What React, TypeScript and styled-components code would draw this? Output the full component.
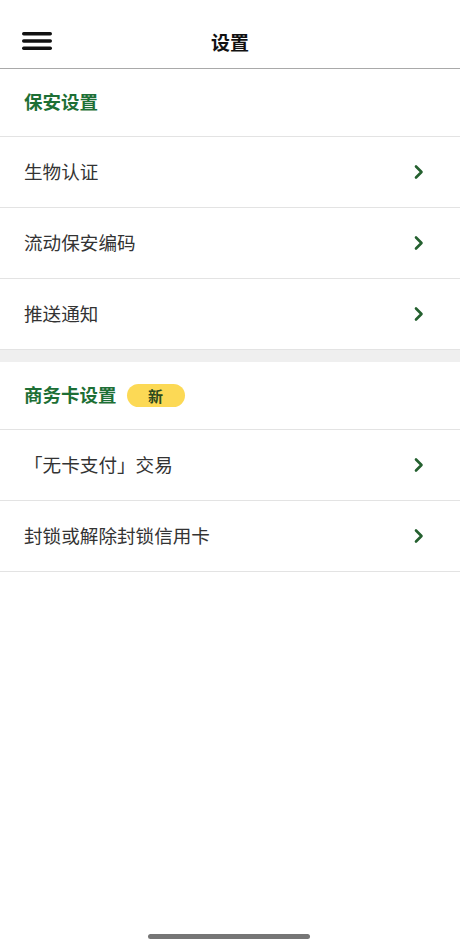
import React from 'react';
import styled, {createGlobalStyle} from 'styled-components';

const GlobalStyle = createGlobalStyle`
    html, body {
        margin: 0;
        padding: 0;
        background: #ffffff;
    }
    body {
        font-family: "Noto Sans CJK SC", "Noto Sans", sans-serif;
        color: #333333;
    }
`;

const Page = styled.div`
    width: 460px;
    height: 949px;
    display: flex;
    flex-direction: column;
    background: #ffffff;
    position: relative;
    overflow: hidden;
`;

const TopBar = styled.div`
    height: 69px;
    box-sizing: border-box;
    padding-top: 14px;
    display: grid;
    grid-template-columns: 80px 1fr 80px;
    align-items: center;
    border-bottom: 1px solid #a9a9a9;
`;

const MenuButton = styled.div`
    padding-left: 22px;
    display: flex;
    align-items: center;
`;

const Title = styled.div`
    text-align: center;
    font-size: 19px;
    font-weight: 700;
    color: #111111;
    line-height: 1;
`;

const SectionHeader = styled.div`
    height: 67px;
    display: flex;
    align-items: center;
    gap: 10px;
    padding-left: 24px;
    border-bottom: 1px solid #e3e3e3;
`;

const SectionTitle = styled.span`
    font-size: 18.5px;
    font-weight: 700;
    color: #1d6f35;
    padding-bottom: 3px;
`;

const Badge = styled.span`
    width: 58px;
    height: 23px;
    border-radius: 12px;
    background: #fcd955;
    color: #2b4a1e;
    font-size: 15px;
    font-weight: 700;
    display: flex;
    align-items: center;
    justify-content: center;
`;

const Row = styled.div`
    height: 70px;
    display: flex;
    align-items: center;
    justify-content: space-between;
    padding: 0 35px 0 24px;
    border-bottom: 1px solid #e3e3e3;
`;

const Label = styled.span`
    font-size: 18.6px;
    color: #333333;
    padding-bottom: 3px;
`;

const Gap = styled.div`
    height: 12px;
    background: #efefef;
`;

const HomeBar = styled.div`
    position: absolute;
    left: 148px;
    bottom: 10px;
    width: 162px;
    height: 5px;
    border-radius: 3px;
    background: #767676;
`;

const Chevron = () => (
    <svg width="12" height="16" viewBox="0 0 12 16">
        <path d="M3 2.5 L8.5 8 L3 13.5" fill="none" stroke="#24602f" strokeWidth="2.6" strokeLinecap="round" strokeLinejoin="round"/>
    </svg>
);

const Hamburger = () => (
    <svg width="30" height="22" viewBox="0 0 30 22">
        <rect x="0" y="2" width="30" height="3.4" rx="1.7" fill="#111"/>
        <rect x="0" y="9.3" width="30" height="3.4" rx="1.7" fill="#111"/>
        <rect x="0" y="16.6" width="30" height="3.4" rx="1.7" fill="#111"/>
    </svg>
);

const securityItems = ['生物认证', '流动保安编码', '推送通知'];
const cardItems = ['「无卡支付」交易', '封锁或解除封锁信用卡'];

export default function App() {
    return (
        <Page>
            <GlobalStyle/>
            <TopBar>
                <MenuButton><Hamburger/></MenuButton>
                <Title>设置</Title>
                <div/>
            </TopBar>
            <SectionHeader>
                <SectionTitle>保安设置</SectionTitle>
            </SectionHeader>
            {securityItems.map(item => (
                <Row key={item}>
                    <Label>{item}</Label>
                    <Chevron/>
                </Row>
            ))}
            <Gap/>
            <SectionHeader>
                <SectionTitle>商务卡设置</SectionTitle>
                <Badge>新</Badge>
            </SectionHeader>
            {cardItems.map(item => (
                <Row key={item}>
                    <Label>{item}</Label>
                    <Chevron/>
                </Row>
            ))}
            <HomeBar/>
        </Page>
    );
}
